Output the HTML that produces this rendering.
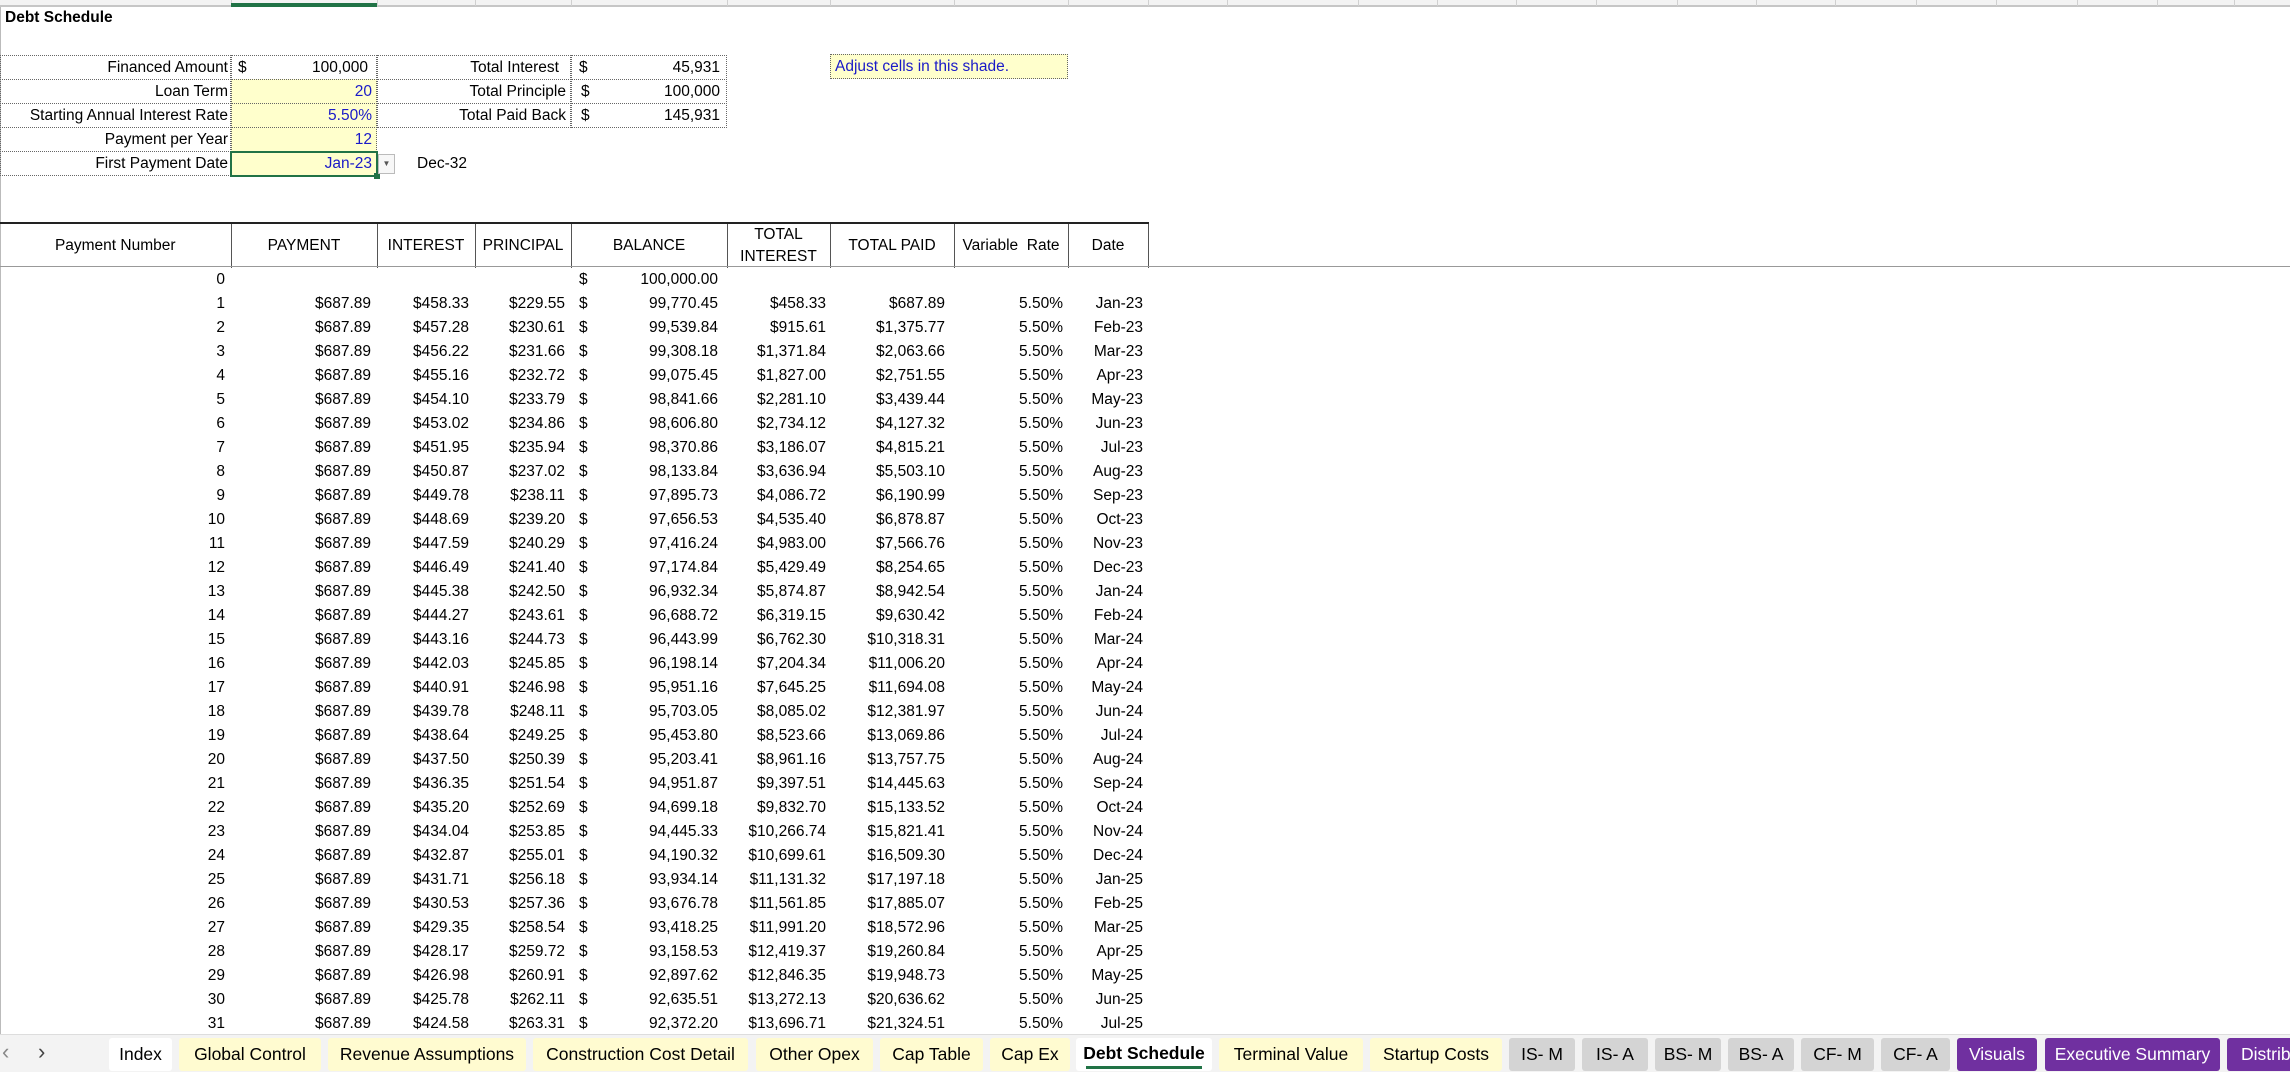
<!DOCTYPE html>
<html><head><meta charset="utf-8"><style>
*{margin:0;padding:0;box-sizing:border-box}
body{width:2290px;height:1072px;overflow:hidden;background:#fff;font-family:"Liberation Sans",Arial,sans-serif;font-size:15.5px;color:#000;position:relative}
.a{position:absolute;white-space:nowrap}
.hdr{position:absolute;left:0;top:0;width:2290px;height:7px;background:#f3f3f3;border-bottom:2px solid #c6c6c6}
.hdr i{position:absolute;top:0;width:1px;height:6px;background:#d0d0d0}
.r{text-align:right}
.inp{color:#1a1ac8}
.yl{background:#ffffcc}
.dot{border:1px dotted #666}
table{position:absolute;border-collapse:collapse;table-layout:fixed}
#t td{height:24px;padding:0 6px 0 0;text-align:right;white-space:nowrap;line-height:24px}
#h{left:0;top:222px;width:1148px;border-top:2px solid #222}
#h td{height:44px;text-align:center;border-left:1px solid #555;line-height:22px;white-space:nowrap}
#h td:first-child{border-left:none}
.tab{position:absolute;top:1038px;height:33px;line-height:33px;text-align:center;font-size:17.5px;border-radius:3px;white-space:nowrap;overflow:hidden}
.y{background:#fffbd0}.g{background:#d4d4d4}.p{background:#7030a0;color:#fff}
</style></head><body>
<div class="hdr">
<i style="left:231px"></i><i style="left:377px"></i><i style="left:475px"></i><i style="left:571px"></i><i style="left:727px"></i><i style="left:830px"></i><i style="left:954px"></i><i style="left:1068px"></i><i style="left:1148px"></i><i style="left:1227px"></i><i style="left:1358px"></i><i style="left:1437px"></i><i style="left:1516px"></i><i style="left:1596px"></i><i style="left:1677px"></i><i style="left:1756px"></i><i style="left:1835px"></i><i style="left:1916px"></i><i style="left:1996px"></i><i style="left:2077px"></i><i style="left:2157px"></i><i style="left:2234px"></i>
<div style="position:absolute;left:231px;top:3px;width:146px;height:4px;background:#217346"></div>
</div>
<div class="a" style="left:0;top:7px;width:1px;height:1027px;background:#bbb"></div>
<div class="a" style="left:5px;top:9px;font-weight:bold;font-size:15.5px">Debt Schedule</div>

<div class="a dot" style="left:0;top:55px;width:231px;height:121px"></div>
<div class="a" style="left:0;top:79px;width:231px;border-top:1px dotted #666"></div>
<div class="a" style="left:0;top:103px;width:231px;border-top:1px dotted #666"></div>
<div class="a" style="left:0;top:127px;width:231px;border-top:1px dotted #666"></div>
<div class="a" style="left:0;top:151px;width:231px;border-top:1px dotted #666"></div>
<div class="a r" style="right:2062px;top:56px;line-height:23px">Financed Amount</div>
<div class="a r" style="right:2062px;top:80px;line-height:23px">Loan Term</div>
<div class="a r" style="right:2062px;top:104px;line-height:23px">Starting Annual Interest Rate</div>
<div class="a r" style="right:2062px;top:128px;line-height:23px">Payment per Year</div>
<div class="a r" style="right:2062px;top:152px;line-height:23px">First Payment Date</div>

<div class="a dot" style="left:231px;top:55px;width:146px;height:25px"></div>
<div class="a yl dot" style="left:231px;top:79px;width:146px;height:25px"></div>
<div class="a yl dot" style="left:231px;top:103px;width:146px;height:25px"></div>
<div class="a yl dot" style="left:231px;top:127px;width:146px;height:25px"></div>
<div class="a yl" style="left:230px;top:151px;width:148px;height:26px;border:2px solid #217346"></div>
<div class="a" style="left:374px;top:173px;width:6px;height:6px;background:#217346"></div>
<div class="a" style="left:238px;top:56px;line-height:23px">$</div>
<div class="a r" style="right:1922px;top:56px;line-height:23px">100,000</div>
<div class="a r inp" style="right:1918px;top:80px;line-height:23px">20</div>
<div class="a r inp" style="right:1918px;top:104px;line-height:23px">5.50%</div>
<div class="a r inp" style="right:1918px;top:128px;line-height:23px">12</div>
<div class="a r inp" style="right:1918px;top:152px;line-height:23px">Jan-23</div>
<div class="a" style="left:378px;top:154px;width:17px;height:20px;border:1px solid #bbb;background:#f7f7f7;font-size:8px;text-align:center;line-height:18px;color:#555">▼</div>
<div class="a" style="left:417px;top:152px;line-height:23px">Dec-32</div>

<div class="a dot" style="left:377px;top:55px;width:194px;height:73px"></div>
<div class="a dot" style="left:571px;top:55px;width:156px;height:73px"></div>
<div class="a" style="left:377px;top:79px;width:350px;border-top:1px dotted #666"></div>
<div class="a" style="left:377px;top:103px;width:350px;border-top:1px dotted #666"></div>
<div class="a r" style="right:1731px;top:56px;line-height:23px">Total Interest</div>
<div class="a r" style="right:1724px;top:80px;line-height:23px">Total Principle</div>
<div class="a r" style="right:1724px;top:104px;line-height:23px">Total Paid Back</div>
<div class="a" style="left:579px;top:56px;line-height:23px">$</div>
<div class="a" style="left:581px;top:80px;line-height:23px">$</div>
<div class="a" style="left:581px;top:104px;line-height:23px">$</div>
<div class="a r" style="right:1570px;top:56px;line-height:23px">45,931</div>
<div class="a r" style="right:1570px;top:80px;line-height:23px">100,000</div>
<div class="a r" style="right:1570px;top:104px;line-height:23px">145,931</div>

<div class="a dot yl inp" style="left:830px;top:54px;width:238px;height:25px;line-height:23px;padding-left:4px;font-size:15.5px">Adjust cells in this shade.</div>

<table id="h"><colgroup><col style="width:231px"><col style="width:146px"><col style="width:98px"><col style="width:96px"><col style="width:156px"><col style="width:103px"><col style="width:124px"><col style="width:114px"><col style="width:80px"></colgroup>
<tr><td>Payment Number</td><td>PAYMENT</td><td>INTEREST</td><td>PRINCIPAL</td><td>BALANCE</td><td>TOTAL<br>INTEREST</td><td>TOTAL PAID</td><td>Variable&nbsp; Rate</td><td style="border-right:1px solid #555">Date</td></tr></table>
<div class="a" style="left:0;top:266px;width:2290px;height:1px;background:#999"></div>

<table id="t" style="left:0;top:268px;width:1148px"><colgroup><col style="width:231px"><col style="width:146px"><col style="width:98px"><col style="width:96px"><col style="width:22px"><col style="width:134px"><col style="width:103px"><col style="width:124px"><col style="width:114px"><col style="width:80px"></colgroup>
<tr><td>0</td><td></td><td></td><td></td><td style="text-align:left;padding:0 0 0 8px">$</td><td style="padding-right:9px">100,000.00</td><td></td><td></td><td></td><td></td></tr>
</table>
<script>
var d=`458.33 229.55 99,770.45 458.33 687.89 Jan-23
457.28 230.61 99,539.84 915.61 1,375.77 Feb-23
456.22 231.66 99,308.18 1,371.84 2,063.66 Mar-23
455.16 232.72 99,075.45 1,827.00 2,751.55 Apr-23
454.10 233.79 98,841.66 2,281.10 3,439.44 May-23
453.02 234.86 98,606.80 2,734.12 4,127.32 Jun-23
451.95 235.94 98,370.86 3,186.07 4,815.21 Jul-23
450.87 237.02 98,133.84 3,636.94 5,503.10 Aug-23
449.78 238.11 97,895.73 4,086.72 6,190.99 Sep-23
448.69 239.20 97,656.53 4,535.40 6,878.87 Oct-23
447.59 240.29 97,416.24 4,983.00 7,566.76 Nov-23
446.49 241.40 97,174.84 5,429.49 8,254.65 Dec-23
445.38 242.50 96,932.34 5,874.87 8,942.54 Jan-24
444.27 243.61 96,688.72 6,319.15 9,630.42 Feb-24
443.16 244.73 96,443.99 6,762.30 10,318.31 Mar-24
442.03 245.85 96,198.14 7,204.34 11,006.20 Apr-24
440.91 246.98 95,951.16 7,645.25 11,694.08 May-24
439.78 248.11 95,703.05 8,085.02 12,381.97 Jun-24
438.64 249.25 95,453.80 8,523.66 13,069.86 Jul-24
437.50 250.39 95,203.41 8,961.16 13,757.75 Aug-24
436.35 251.54 94,951.87 9,397.51 14,445.63 Sep-24
435.20 252.69 94,699.18 9,832.70 15,133.52 Oct-24
434.04 253.85 94,445.33 10,266.74 15,821.41 Nov-24
432.87 255.01 94,190.32 10,699.61 16,509.30 Dec-24
431.71 256.18 93,934.14 11,131.32 17,197.18 Jan-25
430.53 257.36 93,676.78 11,561.85 17,885.07 Feb-25
429.35 258.54 93,418.25 11,991.20 18,572.96 Mar-25
428.17 259.72 93,158.53 12,419.37 19,260.84 Apr-25
426.98 260.91 92,897.62 12,846.35 19,948.73 May-25
425.78 262.11 92,635.51 13,272.13 20,636.62 Jun-25
424.58 263.31 92,372.20 13,696.71 21,324.51 Jul-25`.split("\n");
var t=document.getElementById("t"),h="";
d.forEach(function(l,i){var c=l.split(" ");
h+='<tr><td>'+(i+1)+'</td><td>$687.89</td><td>$'+c[0]+'</td><td>$'+c[1]+'</td><td style="text-align:left;padding:0 0 0 8px">$</td><td style="padding-right:9px">'+c[2]+'</td><td style="padding-right:4px">$'+c[3]+'</td><td style="padding-right:9px">$'+c[4]+'</td><td style="padding-right:5px">5.50%</td><td style="padding-right:5px">'+c[5]+'</td></tr>';});
t.tBodies[0].insertAdjacentHTML("beforeend",h);
</script>

<div class="a" style="left:0;top:1034px;width:2290px;height:38px;background:#f3f3f3;border-top:1px solid #ddd"></div>
<div class="a" style="left:2px;top:1039px;font-size:22px;color:#888">&lsaquo;</div>
<div class="a" style="left:38px;top:1039px;font-size:22px;color:#444">&rsaquo;</div>
<div class="tab" style="left:109px;width:63px;background:#fff">Index</div>
<div class="tab y" style="left:179px;width:142px">Global Control</div>
<div class="tab y" style="left:328px;width:198px">Revenue Assumptions</div>
<div class="tab y" style="left:533px;width:215px">Construction Cost Detail</div>
<div class="tab y" style="left:756px;width:117px">Other Opex</div>
<div class="tab y" style="left:880px;width:103px">Cap Table</div>
<div class="tab y" style="left:990px;width:80px">Cap Ex</div>
<div class="tab" style="left:1076px;width:136px;background:#fff;font-weight:bold;line-height:30px">Debt Schedule<div style="position:absolute;left:10px;right:10px;bottom:2px;height:3px;background:#217346"></div></div>
<div class="tab y" style="left:1219px;width:144px">Terminal Value</div>
<div class="tab y" style="left:1370px;width:132px">Startup Costs</div>
<div class="tab g" style="left:1509px;width:66px">IS- M</div>
<div class="tab g" style="left:1582px;width:66px">IS- A</div>
<div class="tab g" style="left:1655px;width:66px">BS- M</div>
<div class="tab g" style="left:1728px;width:66px">BS- A</div>
<div class="tab g" style="left:1801px;width:73px">CF- M</div>
<div class="tab g" style="left:1881px;width:69px">CF- A</div>
<div class="tab p" style="left:1957px;width:80px">Visuals</div>
<div class="tab p" style="left:2045px;width:175px">Executive Summary</div>
<div class="tab p" style="left:2227px;width:80px;text-align:left;padding-left:14px">Distributions</div>
</body></html>
